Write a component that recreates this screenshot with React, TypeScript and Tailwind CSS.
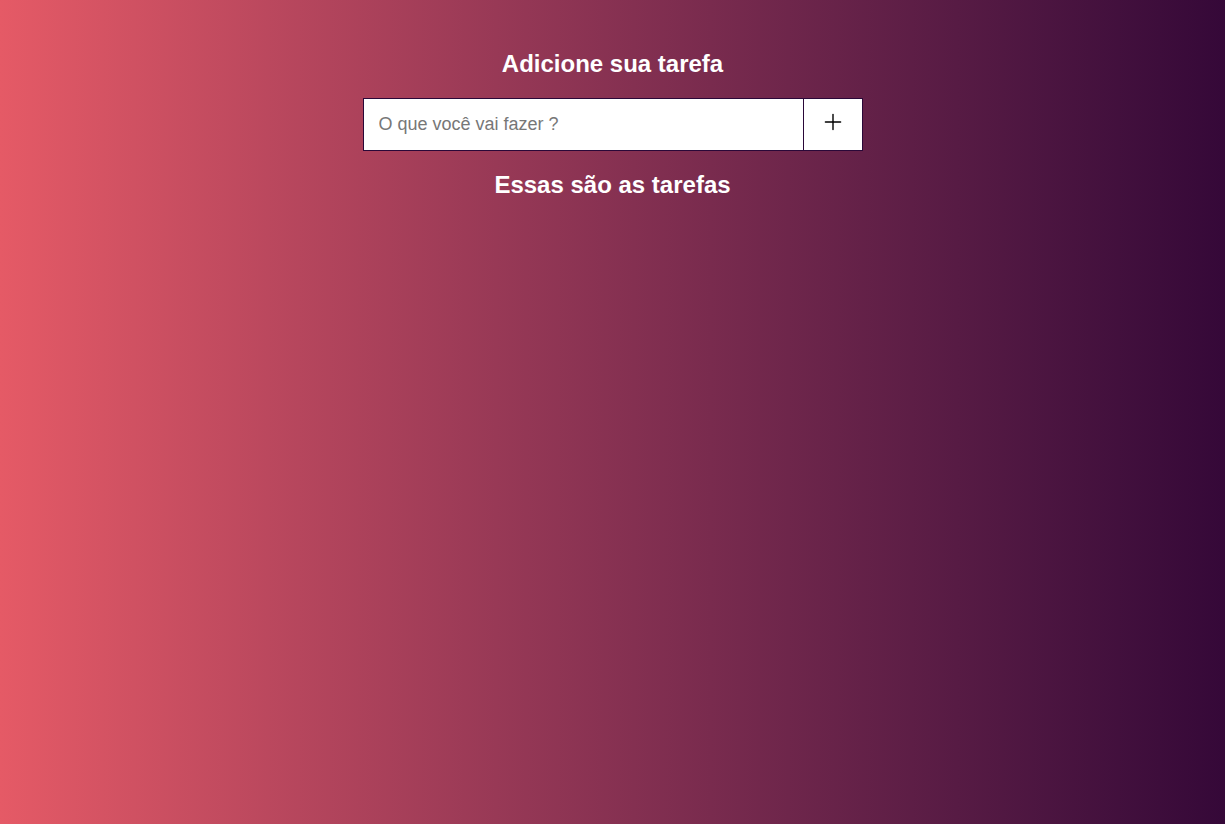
import { Plus } from 'lucide-react'

export default function App() {
  return (
    <div className="min-h-screen w-full bg-gradient-to-r from-[#e55a66] to-[#350838] font-['Liberation_Sans',Arial,sans-serif]">
      <div className="flex flex-col items-center pt-[50px]">
        <h2 className="text-[24px] leading-[28px] font-bold text-white">Adicione sua tarefa</h2>

        <form className="mt-5 flex w-[500px] h-[53px] border border-[#2a0838] bg-white">
          <input
            type="text"
            placeholder="O que você vai fazer ?"
            className="flex-1 h-full px-[15px] text-[18px] text-[#333] placeholder:text-[#777] outline-none"
          />
          <button type="button" className="w-[59px] h-full border-l border-[#2a0838] flex items-center justify-center pb-[5px]">
            <Plus size={26} strokeWidth={1.3} color="#000" />
          </button>
        </form>

        <h2 className="mt-5 text-[24px] leading-[28px] font-bold text-white">Essas são as tarefas</h2>
      </div>
    </div>
  )
}
